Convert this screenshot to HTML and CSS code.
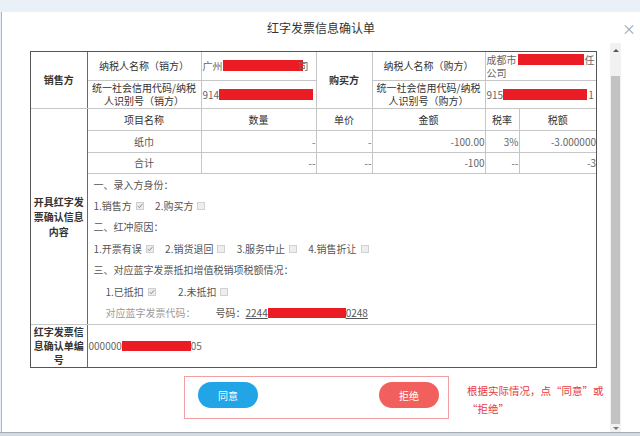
FILE: index.html
```html
<!DOCTYPE html>
<html lang="zh-CN">
<head>
<meta charset="utf-8">
<title>红字发票信息确认单</title>
<link rel="stylesheet" href="styles.css">
</head>
<body>
<div class="topband"></div>
<div class="dialog">
  <div class="dlg-head">
    <div class="dlg-title">红字发票信息确认单</div>
    <span class="close">×</span>
  </div>
  <div class="dlg-body">
    <div class="content">
      <div class="tablewrap">
        <table class="form">
          <colgroup>
            <col class="w1"><col class="w2"><col class="w3"><col class="w4"><col class="w5"><col class="w6"><col class="w7">
          </colgroup>
          <tr class="h28">
            <td rowspan="2" class="lab1">销售方</td>
            <td>纳税人名称（销方）</td>
            <td class="val nw">广州<span class="red rb1"></span>司</td>
            <td rowspan="2" class="lab">购买方</td>
            <td>纳税人名称（购方）</td>
            <td colspan="2" class="val"><span class="nw">成都市<span class="red rb3"></span>任</span>公司</td>
          </tr>
          <tr class="h28">
            <td>统一社会信用代码/纳税人识别号（销方）</td>
            <td class="val nw">914<span class="red rb2"></span></td>
            <td>统一社会信用代码/纳税人识别号（购方）</td>
            <td colspan="2" class="val nw">915<span class="red rb4"></span>1</td>
          </tr>
          <tr class="h22">
            <td rowspan="4" class="lab1 lh15">开具红字发票确认信息内容</td>
            <td>项目名称</td>
            <td>数量</td>
            <td>单价</td>
            <td>金额</td>
            <td>税率</td>
            <td>税额</td>
          </tr>
          <tr class="h22">
            <td class="grey">纸巾</td>
            <td class="num">-</td>
            <td class="num">-</td>
            <td class="num">-100.00</td>
            <td class="num">3%</td>
            <td class="num">-3.000000</td>
          </tr>
          <tr class="h21">
            <td class="grey">合计</td>
            <td class="num">--</td>
            <td class="num">--</td>
            <td class="num">-100</td>
            <td class="num">--</td>
            <td class="num">-3</td>
          </tr>
          <tr class="h151">
            <td colspan="6" class="info">
              <div class="ln">一、录入方身份：</div>
              <div class="ln">
                <span class="opt">1.销售方<svg class="cb" width="8" height="8" viewBox="0 0 8 8"><rect x="0.5" y="0.5" width="7" height="7" fill="#ececec" stroke="#cfcfcf"/><path d="M1.8 4.1 L3.3 5.6 L6.3 2.2" fill="none" stroke="#8a8a8a" stroke-width="1"/></svg></span>
                <span class="opt">2.购买方<svg class="cb" width="8" height="8" viewBox="0 0 8 8"><rect x="0.5" y="0.5" width="7" height="7" fill="#eeeeee" stroke="#d2d2d2"/></svg></span>
              </div>
              <div class="ln">二、红冲原因：</div>
              <div class="ln">
                <span class="opt">1.开票有误<svg class="cb" width="8" height="8" viewBox="0 0 8 8"><rect x="0.5" y="0.5" width="7" height="7" fill="#ececec" stroke="#cfcfcf"/><path d="M1.8 4.1 L3.3 5.6 L6.3 2.2" fill="none" stroke="#8a8a8a" stroke-width="1"/></svg></span>
                <span class="opt">2.销货退回<svg class="cb" width="8" height="8" viewBox="0 0 8 8"><rect x="0.5" y="0.5" width="7" height="7" fill="#eeeeee" stroke="#d2d2d2"/></svg></span>
                <span class="opt">3.服务中止<svg class="cb" width="8" height="8" viewBox="0 0 8 8"><rect x="0.5" y="0.5" width="7" height="7" fill="#eeeeee" stroke="#d2d2d2"/></svg></span>
                <span class="opt">4.销售折让<svg class="cb" width="8" height="8" viewBox="0 0 8 8"><rect x="0.5" y="0.5" width="7" height="7" fill="#eeeeee" stroke="#d2d2d2"/></svg></span>
              </div>
              <div class="ln">三、对应蓝字发票抵扣增值税销项税额情况：</div>
              <div class="ln indent">
                <span class="opt wide">1.已抵扣<svg class="cb" width="8" height="8" viewBox="0 0 8 8"><rect x="0.5" y="0.5" width="7" height="7" fill="#ececec" stroke="#cfcfcf"/><path d="M1.8 4.1 L3.3 5.6 L6.3 2.2" fill="none" stroke="#8a8a8a" stroke-width="1"/></svg></span>
                <span class="opt">2.未抵扣<svg class="cb" width="8" height="8" viewBox="0 0 8 8"><rect x="0.5" y="0.5" width="7" height="7" fill="#eeeeee" stroke="#d2d2d2"/></svg></span>
              </div>
              <div class="ln indent">
                <span class="muted">对应蓝字发票代码：</span><span class="hm">号码：<span class="code">2244<span class="red rb5"></span>0248</span></span>
              </div>
            </td>
          </tr>
          <tr class="h43">
            <td class="lab1 lh14">红字发票信息确认单编号</td>
            <td colspan="6" class="val nw">000000<span class="red rb6"></span>05</td>
          </tr>
        </table>
      </div>
      <div class="actions">
        <div class="btnbox">
          <span class="btn agree">同意</span>
          <span class="btn reject">拒绝</span>
        </div>
        <div class="note">根据实际情况，点“同意”或<br>“拒绝”</div>
      </div>
    </div>
    <div class="scroll">
      <div class="sb-up"><span class="tri-up"></span></div>
      <div class="sb-thumb"></div>
      <div class="sb-down"><span class="tri-down"></span></div>
    </div>
  </div>
</div>
<div class="bottomband"></div>
</body>
</html>
```
FILE: styles.css
```css
* { box-sizing: border-box; }
html, body { margin: 0; height: 436px; overflow: hidden; }
body {
  font-family: "Noto Sans CJK SC", "Noto Sans", sans-serif;
  font-size: 10px;
  color: #555;
  background: #eaf0f7;
  display: flex;
  flex-direction: column;
}
.topband { height: 12px; flex: none; }
.dialog {
  flex: none;
  height: 420px;
  margin-left: 1px;
  background: #fff;
  border-left: 1px solid #b3b3b3;
  display: flex;
  flex-direction: column;
}
.bottomband { flex: 1; background: #d3dae2; border-top: 1px solid #a5adb6; }

.dlg-head {
  height: 31px;
  flex: none;
  display: grid;
  grid-template-columns: 1fr auto 1fr;
  align-items: center;
}
.dlg-title { grid-column: 2; font-size: 12px; color: #333; }
.close { grid-column: 3; justify-self: end; margin-right: 4px; font-size: 14px; color: #a8a8a8; line-height: 1; }

.dlg-body { flex: 1; min-height: 0; display: flex; padding-right: 19px; }
.content { flex: 1; padding: 8px 0 0 28px; overflow: hidden; }

.scroll { width: 11px; flex: none; background: #f1f1f1; display: flex; flex-direction: column; }
.sb-up { height: 33px; display: flex; justify-content: center; padding-top: 6px; }
.sb-thumb { flex: 1; background: #c2c2c2; margin: 0 1px; }
.sb-down { height: 8px; display: flex; justify-content: center; padding-top: 3px; }
.tri-up { width: 0; height: 0; border-left: 3px solid transparent; border-right: 3px solid transparent; border-bottom: 3px solid #555; }
.tri-down { width: 0; height: 0; border-left: 3px solid transparent; border-right: 3px solid transparent; border-top: 3px solid #777; }

.tablewrap { width: 567px; border: 1px solid #555; }
.form { width: 565px; border-collapse: collapse; border-style: hidden; table-layout: fixed; }
.w1 { width: 56px; } .w2 { width: 114px; } .w3 { width: 115px; } .w4 { width: 56px; }
.w5 { width: 113px; } .w6 { width: 34px; } .w7 { width: 77px; }
.h28 { height: 28px; } .h22 { height: 22px; } .h21 { height: 21px; } .h151 { height: 151px; } .h43 { height: 43px; }

.form td {
  border: 1px solid #c6c6c6;
  padding: 0 2px;
  line-height: 13px;
  text-align: center;
  color: #333;
  overflow: hidden;
}
.form td.lab1 { font-weight: bold; border-right-color: #6a6a6a; padding: 0; }
.form td.lab { font-weight: bold; }
.form td.lh15 { line-height: 15px; }
.form td.lh14 { line-height: 14px; }
.form td.val { text-align: left; padding: 0 1px; color: #666; }
.form td.nw, .nw { white-space: nowrap; }
.form td.grey { color: #555; }
.form td.num { text-align: right; padding: 0; color: #666; white-space: nowrap; }

.red { display: inline-block; background: #ec1c24; height: 11px; vertical-align: -1px; }
.rb1 { width: 80px; margin-right: -4px; }
.rb2 { width: 94px; }
.rb3 { width: 66px; margin: 0 1px; }
.rb4 { width: 84px; margin-right: 1px; }
.rb5 { width: 78px; vertical-align: -1px; height: 10px; }
.rb6 { width: 69px; height: 10px; }

.form td.info { text-align: left; vertical-align: top; padding: 0 0 0 6px; color: #555; }
.ln { line-height: 21.4px; white-space: nowrap; }
.ln.indent { padding-left: 12px; }
.opt { margin-right: 9px; }
.opt.wide { margin-right: 20px; }
.cb { margin-left: 4px; vertical-align: -0.5px; }
.muted { color: #9a9a9a; }
.hm { margin-left: 20px; }
.code { text-decoration: underline; }

.actions { display: flex; align-items: flex-start; margin: 8px 0 0 154px; }
.btnbox {
  width: 265px;
  height: 43px;
  border: 1px solid #f0a0a3;
  display: flex;
  justify-content: space-between;
  padding: 5px 9px 0 13px;
}
.btn {
  width: 60px;
  height: 26px;
  border-radius: 13px;
  color: #fff;
  font-size: 10px;
  display: flex;
  align-items: center;
  justify-content: center;
}
.agree { background: #21a5e6; }
.reject { background: #f2605d; }
.note { margin-left: 18px; padding-top: 6px; color: #e53b3f; font-size: 10.5px; line-height: 18px; white-space: nowrap; }
```
